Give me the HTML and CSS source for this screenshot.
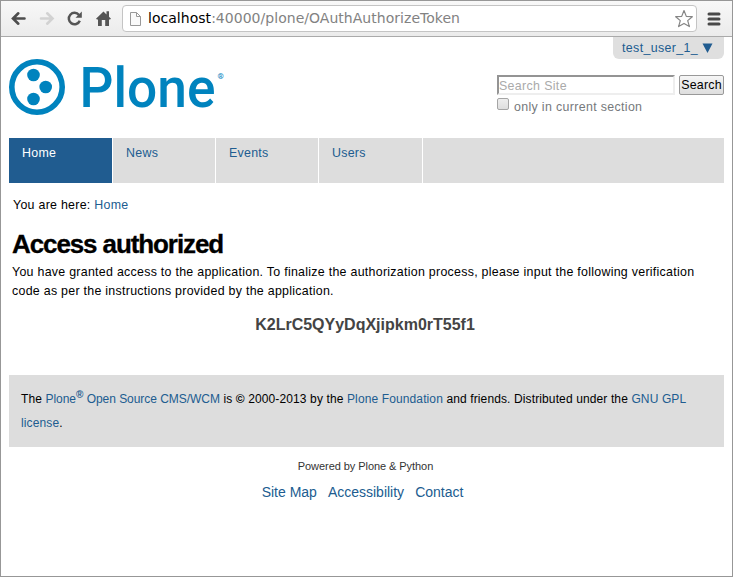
FILE: index.html
```html
<!DOCTYPE html>
<html lang="en">
<head>
<meta charset="utf-8">
<title>Access authorized</title>
<link rel="stylesheet" href="styles.css">
</head>
<body>
<div class="window">
  <header class="toolbar">
    <svg class="nav-icons" width="120" height="35" viewBox="1 1 120 35">
      <path d="M24.5 18.5H14M18.3 13.3L13 18.5L18.3 23.7" fill="none" stroke="#4d4d4d" stroke-width="2.6" stroke-linecap="round"/>
      <path d="M41 18.5H51M47.2 13.3L52.5 18.5L47.2 23.7" fill="none" stroke="#d2d2d2" stroke-width="2.6" stroke-linecap="round"/>
      <path d="M79 15A5.7 5.7 0 1 0 79.8 20.8" fill="none" stroke="#555" stroke-width="2.5"/>
      <path d="M81.8 11.5V17.8H75.5Z" fill="#555"/>
      <path d="M96 18.8L103.5 11.5L106.5 14.4V11.2H109V16.8L111 18.8L110 19.6H109V26H105.2V20H101.8V26H98V19.6H97Z" fill="#555"/>
    </svg>
    <div class="address">
      <svg width="13" height="16" viewBox="0 0 13 16"><path d="M1.5 1.5H7.5L11.5 5.5V14.5H1.5ZM7.5 1.5V5.5H11.5" fill="#fafafa" stroke="#999"/></svg>
      <span class="url"><b>localhost</b>:40000/plone/OAuthAuthorizeToken</span>
      <svg class="star" width="20" height="20" viewBox="0 0 20 20"><path d="M10 1.5L12.3 7.4L18.3 7.7L13.7 11.6L15.4 17.6L10 14.4L4.6 17.6L6.3 11.6L1.7 7.7L7.7 7.4Z" fill="#fff" stroke="#858585" stroke-width="1.2" stroke-linejoin="round"/></svg>
    </div>
    <svg class="menu" width="14" height="14" viewBox="0 0 14 14"><path d="M2 2H12M2 7H12M2 12H12" stroke="#484848" stroke-width="3" stroke-linecap="round"/></svg>
  </header>
  <div class="page">
    <div class="top">
      <svg class="logo" width="220" height="58" viewBox="0 0 220 58">
        <g fill="#0083be">
          <circle cx="28" cy="28" r="25.2" fill="none" stroke="#0083be" stroke-width="5.6"/>
          <circle cx="24.5" cy="16" r="6.3"/><circle cx="36.7" cy="28" r="6.3"/><circle cx="24.5" cy="40" r="6.3"/>
          <text class="brand" x="70.5" y="48" textLength="136" lengthAdjust="spacingAndGlyphs">Plone</text>
          <text class="reg" x="208.5" y="20">®</text>
        </g>
      </svg>
      <div class="tools">
        <div class="user"><span>test_user_1_</span><svg width="11" height="10" viewBox="0 0 11 10"><path d="M0.5 0.5H10.5L5.5 10Z" fill="#205c90"/></svg></div>
        <div class="search">
          <span class="field">Search Site</span><span class="button">Search</span>
        </div>
        <div class="section"><i class="box"></i><span>only in current section</span></div>
      </div>
    </div>
    <nav class="tabs"><a class="on">Home</a><a>News</a><a>Events</a><a class="last">Users</a></nav>
    <div class="crumbs">You are here: <a>Home</a></div>
    <h1><span>Access authorized</span></h1>
    <p class="body"><span>You have granted access to the application. To finalize the authorization process, please input the following verification</span><br><span>code as per the instructions provided by the application.</span></p>
    <div class="code"><span>K2LrC5QYyDqXjipkm0rT55f1</span></div>
    <footer class="footer">The <a class="product">Plone<sup>®</sup> Open Source CMS/WCM</a> is <span class="copy">©</span> 2000-2013 by the <a>Plone Foundation</a> and friends. Distributed under the <a>GNU GPL<br>license</a>.</footer>
    <div class="powered"><span>Powered by Plone &amp; Python</span></div>
    <div class="links"><a>Site Map</a><a>Accessibility</a><a>Contact</a></div>
  </div>
</div>
</body>
</html>
```
FILE: styles.css
```css
* { box-sizing: border-box; }
body { margin: 0; background: #fff; font-family: "Liberation Sans", Arial, sans-serif; font-size: 12.4px; letter-spacing: .28px; color: #000; white-space: nowrap; }
a { color: #205c90; }
.window { width: 733px; height: 577px; border: 1px solid #979797; overflow: hidden; }
.toolbar { display: flex; align-items: center; height: 36px; background: linear-gradient(#f8f8f8, #ebebeb); border-bottom: 1px solid #aaa; }
.address { display: flex; align-items: center; width: 575px; height: 27px; margin-left: 1px; padding: 0 3px 0 6px; border: 1px solid #c4c4c4; border-radius: 4px; background: #fff; }
.url { flex: 1; margin: -2px 0 0 6px; font: 14px/20px "DejaVu Sans", sans-serif; letter-spacing: .03px; color: #828282; }
.url b { color: #000; font-weight: 400; }
.star { margin-right: -1px; }
.menu { margin-left: 10px; }
.page { padding: 0 8px; }
.top { display: flex; justify-content: space-between; height: 101px; }
.logo { margin-top: 22px; overflow: visible; }
.brand { font: 500 56px Roboto, sans-serif; letter-spacing: 0; }
.reg { font: 700 8px Roboto, sans-serif; letter-spacing: 0; }
.tools { width: 227px; }
.user { display: flex; align-items: center; width: 111px; height: 22px; margin-left: auto; padding-left: 9px; gap: 4px; background: #dfdfdf; border-radius: 0 0 6px 6px; color: #205c90; letter-spacing: .37px; }
.search { display: flex; justify-content: space-between; margin-top: 16px; }
.field { width: 178px; height: 20px; border: 2px solid; border-color: #949494 #eee #eee #949494; line-height: 18px; color: #aaa; letter-spacing: .35px; }
.button { width: 45px; height: 20px; border: 1px solid #999; border-radius: 2px; background: linear-gradient(#f6f6f6, #dedede); text-align: center; line-height: 19px; letter-spacing: .2px; }
.section { display: flex; margin-top: 3px; color: #76797c; line-height: 18px; letter-spacing: .34px; }
.box { width: 12px; height: 12px; margin-right: 5px; border: 1px solid #a5a5a5; border-radius: 2px; background: linear-gradient(#eee, #dedede); }
.tabs { display: flex; height: 45px; background: #ddd; }
.tabs a { width: 103px; padding: 7px 0 0 13px; line-height: 16px; border-right: 1px solid #fff; }
.tabs .on { width: 104px; background: #205c90; color: #fff; }
.tabs .last { width: 104px; }
.crumbs { margin: 13px 0 0 4px; line-height: 18px; }
h1 { margin: 15px 0 0 3px; font-size: 26px; line-height: 30px; letter-spacing: -1.1px; -webkit-text-stroke: .3px #000; }
.body { margin: 4px 0 0 3px; line-height: 19px; }
.code { margin: 14px 3px 0 0; text-align: center; font-size: 16px; line-height: 20px; font-weight: 700; color: #444; letter-spacing: 0; }
.footer { height: 72px; margin-top: 40px; padding: 12px; background: #ddd; line-height: 24px; font-size: 12px; letter-spacing: .12px; }
.product { letter-spacing: -.04px; }
.footer sup { font-size: 10px; line-height: 0; font-weight: 700; }
.copy { font-weight: 700; }
.powered { margin: 11px 2px 0 0; text-align: center; font-size: 11px; line-height: 16px; letter-spacing: -.06px; color: #333; }
.links { display: flex; justify-content: center; gap: 11px; margin: 8px 8px 0 0; font-size: 14px; line-height: 20px; letter-spacing: 0; }
```
